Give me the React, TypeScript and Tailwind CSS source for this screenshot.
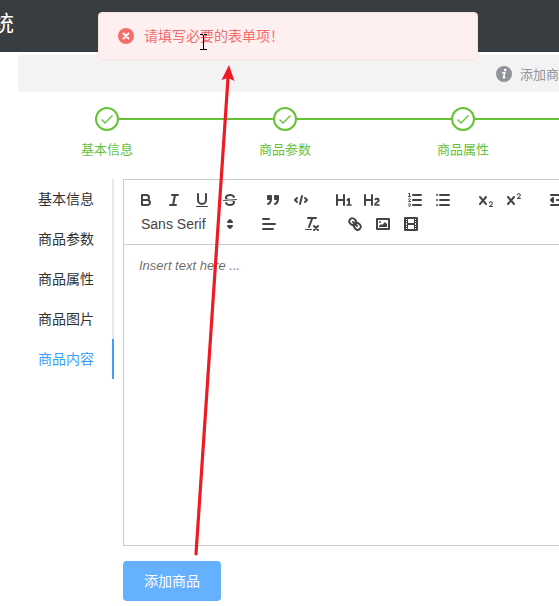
import React, { useState } from "react";

const X_MARK =
  "M9.65,5.241a1,1,0,0,0-1.409.108L6,7.964,3.759,5.349A1,1,0,0,0,2.192,6.59178Q2.21541,6.6213,2.241,6.649L4.684,9.5,2.241,12.35A1,1,0,0,0,3.71,13.70722q0.02557-.02768.049-0.05722L6,11.036,8.241,13.65a1,1,0,1,0,1.567-1.24277Q9.78459,12.3777,9.759,12.35L7.316,9.5,9.759,6.651A1,1,0,0,0,9.65,5.241Z";

const fill = { fill: "#444", stroke: "none" };

function Icon({ children }: { children: React.ReactNode }) {
  return (
    <svg
      viewBox="0 0 18 18"
      className="block size-[18px]"
      fill="none"
      stroke="#444"
      strokeWidth={2}
      strokeLinecap="round"
      strokeLinejoin="round"
      aria-hidden="true"
    >
      {children}
    </svg>
  );
}

function Tool({ label, children }: { label: string; children: React.ReactNode }) {
  return (
    <button type="button" aria-label={label} className="h-6 w-7 shrink-0 px-[5px] py-[3px]">
      <Icon>{children}</Icon>
    </button>
  );
}

function Group({ children }: { children: React.ReactNode }) {
  return <div className="flex shrink-0">{children}</div>;
}

function Toolbar() {
  return (
    <div role="toolbar" aria-label="Formatting" className="overflow-hidden border border-[#ccc] p-2">
      <div className="flex gap-[15px]">
        <Group>
          <Tool label="Bold">
            <path d="M5,4H9.5A2.5,2.5,0,0,1,12,6.5v0A2.5,2.5,0,0,1,9.5,9H5V4Z" />
            <path d="M5,9h5.5A2.5,2.5,0,0,1,13,11.5v0A2.5,2.5,0,0,1,10.5,14H5V9Z" />
          </Tool>
          <Tool label="Italic">
            <path d="M7,4H13M5,14H11M8,14L10,4" />
          </Tool>
          <Tool label="Underline">
            <path d="M5,3V9a4.012,4.012,0,0,0,4,4H9a4.012,4.012,0,0,0,4-4V3" />
            <rect {...fill} height="1" rx="0.5" width="12" x="3" y="15" />
          </Tool>
          <Tool label="Strike">
            <path strokeWidth={1} d="M15.5,8.5L2.5,9.5" />
            <path {...fill} d="M9.007,8C6.542,7.791,6,7.519,6,6.5,6,5.792,7.283,5,9,5c1.571,0,2.765.679,2.969,1.309a1,1,0,0,0,1.9-.617C13.356,4.106,11.354,3,9,3,6.2,3,4,4.538,4,6.5a3.2,3.2,0,0,0,.5,1.843Z" />
            <path {...fill} d="M8.984,10C11.457,10.208,12,10.479,12,11.5c0,0.708-1.283,1.5-3,1.5-1.571,0-2.765-.679-2.969-1.309a1,1,0,1,0-1.9.617C4.644,13.894,6.646,15,9,15c2.8,0,5-1.538,5-3.5a3.2,3.2,0,0,0-.5-1.843Z" />
          </Tool>
        </Group>
        <Group>
          <Tool label="Quote">
            <rect fill="#444" height="3" width="3" x="4" y="5" />
            <rect fill="#444" height="3" width="3" x="11" y="5" />
            <path fill="#444" fillRule="evenodd" d="M7,8c0,4.031-3,5-3,5" />
            <path fill="#444" fillRule="evenodd" d="M14,8c0,4.031-3,5-3,5" />
          </Tool>
          <Tool label="Code">
            <path d="M5,7L3,9L5,11M13,7L15,9L13,11M10,5L8,13" />
          </Tool>
        </Group>
        <Group>
          <Tool label="Heading 1">
            <path {...fill} d="M10,4V14a1,1,0,0,1-2,0V10H3v4a1,1,0,0,1-2,0V4A1,1,0,0,1,3,4V8H8V4a1,1,0,0,1,2,0Zm6.06787,9.209H14.98975V7.59863a.54085.54085,0,0,0-.605-.60547h-.62744a1.01119,1.01119,0,0,0-.748.29688L11.645,8.56641a.5435.5435,0,0,0-.022.8584l.28613.30762a.53861.53861,0,0,0,.84717.0332l.09912-.08789a1.2137,1.2137,0,0,0,.2417-.35254h.02246s-.01123.30859-.01123.60547V13.209H12.041a.54085.54085,0,0,0-.605.60547v.43945a.54085.54085,0,0,0,.605.60547h4.02686a.54085.54085,0,0,0,.605-.60547v-.43945A.54085.54085,0,0,0,16.06787,13.209Z" />
          </Tool>
          <Tool label="Heading 2">
            <path {...fill} d="M16.73975,13.81445v.43945a.54085.54085,0,0,1-.605.60547H11.855a.58392.58392,0,0,1-.64893-.60547V14.0127c0-2.90527,3.39941-3.42187,3.39941-4.55469a.77675.77675,0,0,0-.84717-.78125,1.17684,1.17684,0,0,0-.83594.38477c-.2749.26367-.561.374-.85791.13184l-.4292-.34082c-.30811-.24219-.38525-.51758-.1543-.81445a2.97155,2.97155,0,0,1,2.45361-1.17676,2.45393,2.45393,0,0,1,2.68408,2.40918c0,2.45312-3.1792,2.92676-3.27832,3.93848h2.79443A.54085.54085,0,0,1,16.73975,13.81445ZM9,3A.99974.99974,0,0,0,8,4V8H3V4A1,1,0,0,0,1,4V14a1,1,0,0,0,2,0V10H8v4a1,1,0,0,0,2,0V4A.99974.99974,0,0,0,9,3Z" />
          </Tool>
        </Group>
        <Group>
          <Tool label="Ordered list">
            <path d="M7,4H15M7,9H15M7,14H15" />
            <path strokeWidth={1} d="M2.5,5.5H4.5" />
            <path {...fill} d="M3.5,6A0.5,0.5,0,0,1,3,5.5V3.085l-0.276.138A0.5,0.5,0,0,1,2.053,3c-0.124-.247-0.023-0.324.224-0.447l1-.5A0.5,0.5,0,0,1,4,2.5v3A0.5,0.5,0,0,1,3.5,6Z" />
            <path strokeWidth={1} d="M4.5,10.5h-2c0-.234,1.85-1.076,1.85-2.234A0.959,0.959,0,0,0,2.5,8.156" />
            <path strokeWidth={1} d="M2.5,14.846a0.959,0.959,0,0,0,1.85-.109A0.7,0.7,0,0,0,3.75,14a0.688,0.688,0,0,0,.6-0.736,0.959,0.959,0,0,0-1.85-.109" />
          </Tool>
          <Tool label="Bullet list">
            <path d="M6,4H15M6,9H15M6,14H15M3,4H3M3,9H3M3,14H3" />
          </Tool>
        </Group>
        <Group>
          <Tool label="Subscript">
            <path {...fill} d="M15.5,15H13.861a3.858,3.858,0,0,0,1.914-2.975,1.8,1.8,0,0,0-1.6-1.751A1.921,1.921,0,0,0,12.021,11.7a0.50013,0.50013,0,1,0,.957.291h0a0.914,0.914,0,0,1,1.053-.725,0.81,0.81,0,0,1,.744.762c0,1.076-1.16971,1.86982-1.93971,2.43082A1.45639,1.45639,0,0,0,12,15.5a0.5,0.5,0,0,0,.5.5h3A0.5,0.5,0,0,0,15.5,15Z" />
            <path {...fill} d={X_MARK} />
          </Tool>
          <Tool label="Superscript">
            <path {...fill} d="M15.5,7H13.861a4.015,4.015,0,0,0,1.914-2.975,1.8,1.8,0,0,0-1.6-1.751A1.922,1.922,0,0,0,12.021,3.7a0.5,0.5,0,1,0,.957.291,0.917,0.917,0,0,1,1.053-.725,0.81,0.81,0,0,1,.744.762c0,1.077-1.164,1.925-1.934,2.486A1.423,1.423,0,0,0,12,7.5a0.5,0.5,0,0,0,.5.5h3A0.5,0.5,0,0,0,15.5,7Z" />
            <path {...fill} d={X_MARK} />
          </Tool>
        </Group>
        <Group>
          <Tool label="Outdent">
            <path d="M3,14H15M3,4H15M9,9H15" />
            <path fill="#444" d="M5,7V11L3,9Z" />
          </Tool>
        </Group>
      </div>
      <div className="flex gap-[15px]">
        <div className="relative h-6 w-[108px] shrink-0">
          <select
            aria-label="Font"
            className="h-6 w-full appearance-none bg-transparent pl-[9px] font-['Liberation_Sans',sans-serif] text-sm text-[#444] outline-none"
          >
            <option>Sans Serif</option>
            <option>Serif</option>
            <option>Monospace</option>
          </select>
          <span className="pointer-events-none absolute top-[3px] right-px">
            <Icon>
              <path fill="#444" d="M7,11L9,13L11,11Z" />
              <path fill="#444" d="M7,7L9,5L11,7Z" />
            </Icon>
          </span>
        </div>
        <Group>
          <Tool label="Align">
            <path d="M3,9H15M3,14H13M3,4H9" />
          </Tool>
        </Group>
        <Group>
          <Tool label="Clear formatting">
            <path d="M5,3H13M6,12L9.35,3M11,11L15,15M15,11L11,15" />
            <rect {...fill} height="1" rx="0.5" width="7" x="2" y="14" />
          </Tool>
        </Group>
        <Group>
          <Tool label="Link">
            <path d="M7,7L11,11" />
            <path d="M8.9,4.577a3.476,3.476,0,0,1,.36,4.679A3.476,3.476,0,0,1,4.577,8.9C3.185,7.5,2.035,6.4,4.217,4.217S7.5,3.185,8.9,4.577Z" />
            <path d="M13.423,9.1a3.476,3.476,0,0,0-4.679-.36,3.476,3.476,0,0,0,.36,4.679c1.392,1.392,2.5,2.542,4.679.36S14.815,10.5,13.423,9.1Z" />
          </Tool>
          <Tool label="Image">
            <rect height="10" width="12" x="3" y="4" />
            <circle {...fill} cx="6" cy="7" r="1" />
            <path {...fill} d="M5,12V11L7,9L8,10L11,7L13,9V12Z" />
          </Tool>
          <Tool label="Video">
            <rect height="12" width="12" x="3" y="3" />
            <path {...fill} d="M5,3h1v12H5ZM12,3h1v12H12ZM5,8h8v2H5ZM3,5h3v1H3ZM3,7h3v1H3ZM3,10h3v1H3ZM3,12h3v1H3ZM12,5h3v1H12ZM12,7h3v1H12ZM12,10h3v1H12ZM12,12h3v1H12Z" />
          </Tool>
        </Group>
      </div>
    </div>
  );
}

function Steps() {
  const steps = ["基本信息", "商品参数", "商品属性"];
  return (
    <ol className="mt-[15px] ml-[18px] flex">
      {steps.map((step, i) => (
        <li key={step} className="w-[178px] shrink-0 text-center text-[13px] leading-9 text-[#67c23a]">
          <div className="flex items-center">
            <span className={i === 0 ? "h-0.5 flex-1" : "h-0.5 flex-1 bg-[#67c23a]"} />
            <span className="flex size-6 items-center justify-center rounded-full border-2 border-[#67c23a]">
              <svg viewBox="0 0 14 14" className="size-3.5" fill="none" stroke="#67c23a" strokeWidth="1.4" aria-hidden="true">
                <path d="M1.5 7.5 5 11 12.5 3.5" />
              </svg>
            </span>
            <span className="h-0.5 flex-1 bg-[#67c23a]" />
          </div>
          {step}
        </li>
      ))}
      <li aria-hidden="true" className="mt-[11px] h-0.5 flex-1 bg-[#67c23a]" />
    </ol>
  );
}

export default function App() {
  const tabs = ["基本信息", "商品参数", "商品属性", "商品图片", "商品内容"];
  const [active, setActive] = useState(4);
  return (
    <div className="relative overflow-hidden bg-white pb-[5px] font-['Noto_Sans_CJK_SC',sans-serif] text-sm text-[#303133]">
      <header className="flex h-[52px] items-center bg-[#373d41] pb-2">
        <h1 className="-ml-2 text-[22px] text-white">统</h1>
      </header>

      <div className="mt-[3px] ml-[18px] flex h-[37px] items-center justify-end gap-2 rounded-l bg-[#f3f3f3] text-[13px] text-[#909399]">
        <svg viewBox="0 0 16 16" className="size-4" aria-hidden="true">
          <circle cx="8" cy="8" r="8" fill="#909399" />
          <circle cx="9.2" cy="4" r="1.3" fill="#fff" />
          <path d="M6.2 7.1 8.8 6.6 7.5 11.6Q7.5 12.4 9.4 11.2" fill="none" stroke="#fff" strokeWidth="1.5" />
        </svg>
        <span className="shrink-0 pt-0.5">添加商</span>
      </div>

      <Steps />

      <main className="mt-3 flex gap-[9px] pl-[18px]">
        <div role="tablist" aria-orientation="vertical" className="flex shrink-0 flex-col self-start">
          {tabs.map((tab, i) => (
            <button
              key={tab}
              type="button"
              role="tab"
              aria-selected={i === active}
              onClick={() => setActive(i)}
              className={
                i === active
                  ? "h-10 border-r-2 border-[#409eff] pr-[18px] pb-0.5 pl-5 text-[#409eff]"
                  : "h-10 border-r-2 border-[#e4e7ed] pr-[18px] pb-0.5 pl-5"
              }
            >
              {tab}
            </button>
          ))}
        </div>

        <div className="min-w-0 flex-1">
          <div className="-mr-px">
            <Toolbar />
            <textarea
              aria-label="商品内容"
              placeholder="Insert text here ..."
              className="block h-[301px] w-full resize-none border border-t-0 border-[#ccc] px-[15px] py-3 font-['Liberation_Sans',sans-serif] text-[13px] leading-[18px] outline-none placeholder:text-black/60 placeholder:italic"
            />
          </div>
          <button type="button" className="mt-[15px] block h-10 rounded bg-[#66b1ff] px-[21px] pb-0.5 text-white">
            添加商品
          </button>
        </div>
      </main>

      <div
        role="alert"
        className="absolute top-3 left-[98px] flex h-12 w-[380px] items-center gap-2.5 rounded border border-[#fde2e2] bg-[#fef0f0] pl-[19px] text-[#f56c6c]"
      >
        <svg viewBox="0 0 16 16" className="size-4" aria-hidden="true">
          <circle cx="8" cy="8" r="8" fill="#f56c6c" />
          <path d="M5.5 5.5 10.5 10.5M10.5 5.5 5.5 10.5" stroke="#fff" strokeWidth="2" strokeLinecap="round" />
        </svg>
        <span className="pb-0.5">请填写必要的表单项！</span>
      </div>

      {/* Text cursor over the message */}
      <svg viewBox="0 0 8 17" className="pointer-events-none absolute top-[34px] left-[200px] h-[17px] w-2" fill="none" stroke="#000" aria-hidden="true">
        <path d="M0 .5H3M4 .5H7M3.5 1V16M0 15.5H3M4 15.5H7" />
      </svg>

      {/* Arrow from the submit button to the message */}
      <svg viewBox="0 0 50 495" className="pointer-events-none absolute top-[64px] left-[190px] h-[495px] w-[50px]" aria-hidden="true">
        <path d="M6 490 38 14" stroke="#ed1c24" strokeWidth="3.2" strokeLinecap="round" />
        <path d="M39 1 44.5 17 38 14 31.5 16Z" fill="#ed1c24" />
      </svg>
    </div>
  );
}
